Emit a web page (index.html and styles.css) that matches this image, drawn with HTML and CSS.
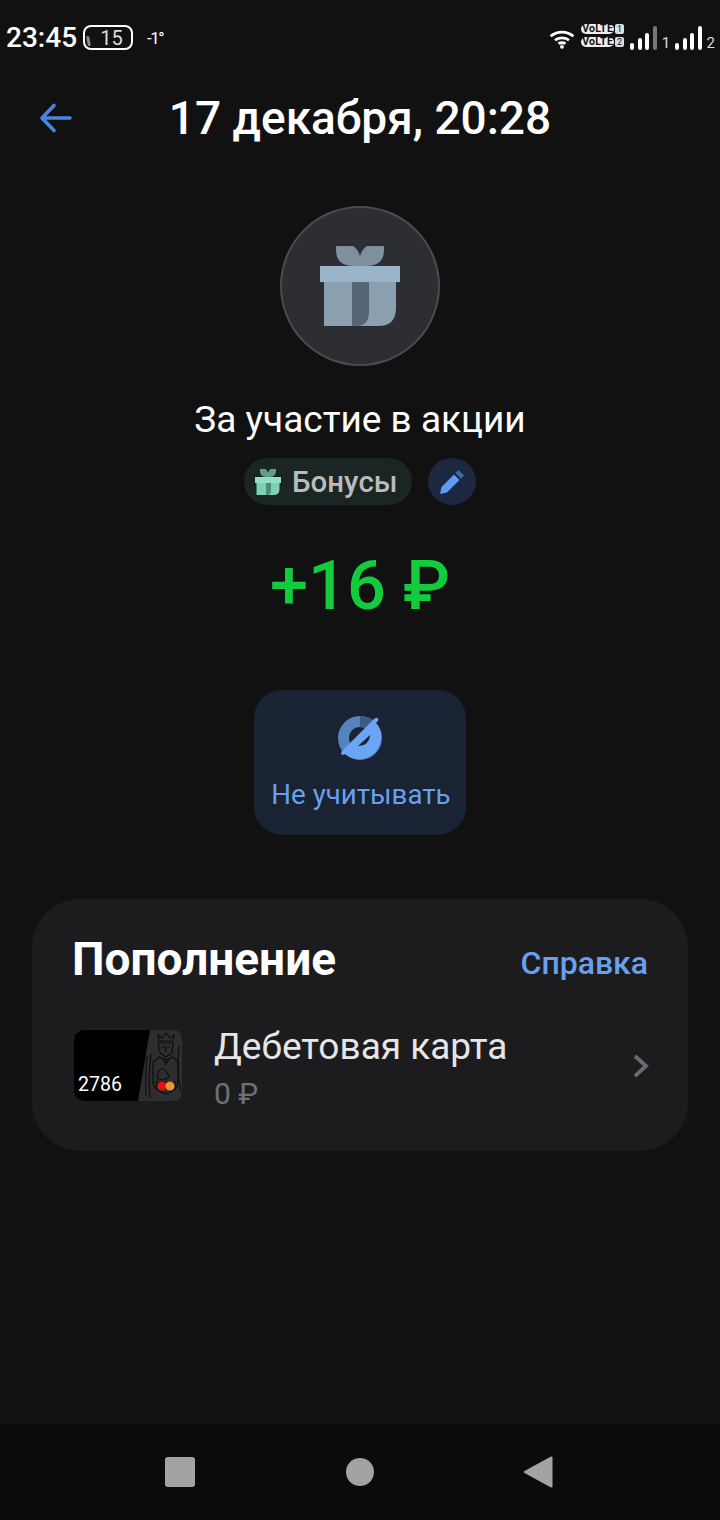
FILE: index.html
```html
<!DOCTYPE html>
<html lang="ru">
<head>
  <meta charset="UTF-8">
  <title>17 декабря, 20:28</title>
  <link rel="stylesheet" href="styles.css">
</head>
<body>
<div class="screen">
  <div class="status">
    <div class="status-left">
      <span class="clock">23:45</span>
      <span class="battery">15</span>
      <span class="temp">-1°</span>
    </div>
    <div class="status-right">
      <svg class="wifi" width="28" height="21" viewBox="0 0 30 24">
        <g fill="none" stroke="#fff" stroke-width="3.200">
          <path d="M2 9.500 C9 3 21 3 28 9.500"/>
          <path d="M7 14 C11 10.500 19 10.500 23 14"/>
          <path d="M11 18 C13 16.500 17 16.500 19 18"/>
        </g>
        <circle cx="15" cy="21.500" r="2.200" fill="#fff"/>
      </svg>
      <div class="volte">
        <div class="volte-row"><span class="volte-tag">VoLTE</span><span class="volte-num">1</span></div>
        <div class="volte-row"><span class="volte-tag">VoLTE</span><span class="volte-num">2</span></div>
      </div>
      <div class="signal">
        <i class="bar h1"></i><i class="bar h2"></i><i class="bar h3"></i><i class="bar h4 dim"></i>
      </div>
      <span class="sim">1</span>
      <div class="signal">
        <i class="bar h1"></i><i class="bar h2"></i><i class="bar h3"></i><i class="bar h4"></i>
      </div>
      <span class="sim">2</span>
    </div>
  </div>

  <div class="header">
    <svg class="back" width="34" height="32" viewBox="0 0 34 32">
      <path d="M31 16 H3 M15 3.500 L3 16 L15 28.500" fill="none" stroke="#4a86e0" stroke-width="3.600" stroke-linecap="round" stroke-linejoin="round"/>
    </svg>
    <h1 class="title">17 декабря, 20:28</h1>
  </div>

  <div class="main">
    <div class="gift-circle">
      <svg width="80" height="80" viewBox="0 0 80 80">
        <path d="M16 0 H33 Q38 3 40 10 Q42 3 47 0 H64 V4 Q64 20 46 20 H34 Q16 20 16 4 Z" fill="#7e8f9d"/>
        <rect x="4" y="36" width="30" height="44" fill="#8aa0b1"/>
        <path d="M44 36 H76 V62 Q76 80 58 80 H36 Z" fill="#8aa0b1"/>
        <path d="M32 36 H49 V66 Q49 80 36 80 H32 Z" fill="#566675"/>
        <rect x="0" y="20" width="80" height="16" fill="#99b4c7"/>
      </svg>
    </div>
    <div class="reason">За участие в акции</div>
    <div class="tags">
      <div class="pill">
        <svg width="26" height="26" viewBox="0 0 26 26">
          <path d="M5 0 H10.500 Q12 1 13 3.500 Q14 1 15.500 0 H21 V1.500 Q21 8 15 8 H11 Q5 8 5 1.500 Z" fill="#5f9f8b"/>
          <path d="M1.500 13 H24.500 V20 Q24.500 26 18.500 26 H1.500 Z" fill="#7fd1b6"/>
          <path d="M11 13 H16 V22 Q16 26 12 26 H11 Z" fill="#4f8b78"/>
          <rect x="0" y="8" width="26" height="6" fill="#8fe0c5"/>
        </svg>
        <span class="pill-text">Бонусы</span>
      </div>
      <div class="edit">
        <svg width="26" height="26" viewBox="0 0 26 26">
          <path d="M1 25 L2.500 18 L15 5.500 L20.500 11 L8 23.500 Z" fill="#5f9bf5"/>
          <path d="M16.500 4 L19.500 1 L25 6.500 L22 9.500 Z" fill="#3f68a8"/>
        </svg>
      </div>
    </div>
    <div class="amount">+16 ₽</div>
    <div class="action">
      <svg width="46" height="46" viewBox="0 0 46 46">
        <circle cx="23" cy="23" r="16.500" fill="none" stroke="#5682bd" stroke-width="11"/>
        <path d="M23 1 A22 22 0 0 1 38 7 L30 15 A11 11 0 0 0 23 12 Z" fill="#3a5a88"/>
        <path d="M4.500 36.500 L37 4 Q41 1 41.500 5 L39 8 A22 22 0 0 1 8 39 L6.500 40 Q3 40 4.500 36.500 Z M21 31 L33 20 A11 11 0 0 1 21 31 Z" fill="#6ea4f5" fill-rule="evenodd"/>
      </svg>
      <span class="action-text">Не учитывать</span>
    </div>
  </div>

  <div class="card">
    <div class="card-head">
      <h2 class="card-title">Пополнение</h2>
      <span class="card-link">Справка</span>
    </div>
    <div class="row">
      <div class="bank-card">
        <span class="bank-num">2786</span>
        <svg class="bank-art" width="44" height="71" viewBox="0 0 44 71">
          <path d="M12 0 H35 Q44 0 44 9 V62 Q44 71 35 71 H0 Z" fill="#2e2e30"/>
          <g fill="none" stroke="#0e0e0e" stroke-width="1.200">
            <path d="M21 11 L20 5 L24 8 L28 3 L32 8 L36 5 L35 11 Z"/>
            <path d="M20 13 H35 L34 23 L28 27 L22 23 Z M24 17 H27 M29 17 H32 M28 17 V22"/>
            <path d="M15 32 L21 27 L28 30 L35 27 L40 32 V52 Q40 60 28 64 Q15 60 15 52 Z"/>
            <path d="M28 30 V36 M24 28 L28 34 L32 28"/>
            <path d="M20 42 Q24 36 28 41 L31 46 Q29 50 24 50 L19 48 Z"/>
            <path d="M16 52 H39 M19 60 Q17 56 20 53 M37 60 Q39 56 36 53"/>
            <path d="M9 26 Q7 45 8 66 M13 24 Q10 45 12 68 M41 16 Q38 40 43 62"/>
          </g>
          <circle cx="24" cy="56" r="4.500" fill="#e3100f"/>
          <circle cx="32" cy="56" r="4.500" fill="#f5a030" fill-opacity="0.920"/>
        </svg>
      </div>
      <div class="row-info">
        <div class="row-title">Дебетовая карта</div>
        <div class="row-sub">0 ₽</div>
      </div>
      <svg class="chevron" width="18" height="26" viewBox="0 0 18 26">
        <path d="M3 3 L14 13 L3 23" fill="none" stroke="#6a6b70" stroke-width="3.800"/>
      </svg>
    </div>
  </div>

  <div class="spacer"></div>

  <div class="navbar">
    <i class="nav-square"></i>
    <i class="nav-circle"></i>
    <svg width="30" height="34" viewBox="0 0 30 34">
      <path d="M28 1.500 Q29.500 1 29.500 3 V31 Q29.500 33 28 32.500 L1.500 18 Q0 17 1.500 16 Z" fill="#a3a3a3"/>
    </svg>
  </div>
</div>
</body>
</html>
```

FILE: styles.css
```css
body, h1, h2 {
  margin: 0;
  padding: 0;
}

body {
  background: #111112;
  font-family: Roboto, "Noto Sans", sans-serif;
  color: #fff;
}

.screen {
  width: 720px;
  height: 1520px;
  display: flex;
  flex-direction: column;
  overflow: hidden;
}

/* status bar */
.status {
  height: 76px;
  padding: 0 5px 0 6px;
  display: flex;
  justify-content: space-between;
  align-items: flex-start;
  box-sizing: border-box;
}

.status-left {
  display: flex;
  align-items: flex-start;
  padding-top: 21px;
}

.clock {
  font-size: 28px;
  font-weight: 500;
  line-height: 34px;
}

.battery {
  width: 50px;
  height: 25px;
  margin: 4px 0 0 6px;
  padding-left: 7px;
  position: relative;
  border: 2px solid #fff;
  border-radius: 8px;
  box-sizing: border-box;
  font-size: 20px;
  line-height: 22px;
  text-align: center;
  color: #ddd;
}

.battery::before {
  content: "";
  position: absolute;
  left: 2px;
  top: 9px;
  width: 3px;
  height: 10px;
  border-radius: 2px;
  background: #8c8c8c;
  transform: skewX(10deg);
}

.temp {
  margin: 4px 0 0 14px;
  font-size: 17px;
  line-height: 26px;
  letter-spacing: -1.500px;
}

.status-right {
  display: flex;
  align-items: flex-end;
  gap: 5px;
  margin-top: 24px;
  height: 26px;
}

.wifi {
  margin-bottom: 1px;
}

.volte {
  width: 44px;
  margin-bottom: 3px;
  display: flex;
  flex-direction: column;
  gap: 3px;
}

.volte-row {
  display: flex;
  gap: 1px;
  height: 10px;
}

.volte-tag {
  width: 33px;
  background: #eee;
  color: #111;
  font-size: 10.500px;
  font-weight: 700;
  line-height: 10px;
  letter-spacing: 0.300px;
  text-align: center;
  border-radius: 5px;
}

.volte-num {
  width: 9px;
  background: #ddd;
  color: #111;
  font-size: 9px;
  line-height: 10px;
  text-align: center;
  border-radius: 2px;
}

.signal {
  display: flex;
  align-items: flex-end;
  gap: 3.500px;
}

.bar {
  width: 4px;
  background: #fff;
  border-radius: 2px;
}

.h1 { height: 7px; }
.h2 { height: 12px; }
.h3 { height: 17px; }
.h4 { height: 24px; }
.dim { background: #777; }

.sim {
  font-size: 15px;
  line-height: 14px;
  color: #ddd;
}

/* header */
.header {
  height: 84px;
  position: relative;
  display: flex;
  align-items: center;
  justify-content: center;
}

.back {
  position: absolute;
  left: 39px;
  top: 26px;
}

.title {
  font-size: 46px;
  font-weight: 500;
  line-height: 84px;
}

/* main block */
.main {
  display: flex;
  flex-direction: column;
  align-items: center;
  padding-top: 46px;
}

.gift-circle {
  width: 160px;
  height: 160px;
  box-sizing: border-box;
  border: 2px solid #4a4b4f;
  border-radius: 50%;
  background: #2d2e33;
  display: flex;
  align-items: center;
  justify-content: center;
}

.reason {
  margin-top: 32px;
  font-size: 37px;
  line-height: 44px;
}

.tags {
  margin-top: 16px;
  display: flex;
  gap: 16px;
}

.pill {
  width: 168px;
  height: 47px;
  box-sizing: border-box;
  padding-left: 11px;
  border-radius: 24px;
  background: #1b2523;
  display: flex;
  align-items: center;
  gap: 11px;
}

.pill-text {
  font-size: 29.500px;
  font-weight: 500;
  color: #b9bbbd;
}

.edit {
  width: 48px;
  height: 47px;
  border-radius: 50%;
  background: #1b2840;
  display: flex;
  align-items: center;
  justify-content: center;
}

.amount {
  margin-top: 41px;
  font-size: 68.500px;
  font-weight: 500;
  line-height: 80px;
  color: #13cc3e;
}

.action {
  margin-top: 64px;
  width: 212px;
  height: 145px;
  box-sizing: border-box;
  padding-top: 25px;
  border-radius: 28px;
  background: #1a2333;
  display: flex;
  flex-direction: column;
  align-items: center;
  gap: 16px;
}

.action-text {
  margin-left: 2px;
  font-size: 27.700px;
  line-height: 36px;
  color: #68a0ee;
}

/* card */
.card {
  margin: 64px 32px 0;
  height: 252px;
  box-sizing: border-box;
  padding: 32px 40px 0 42px;
  border-radius: 48px;
  background: #1c1c1f;
}

.card-head {
  display: flex;
  justify-content: space-between;
  align-items: center;
  height: 56px;
  margin-left: -2px;
}

.card-title {
  font-size: 46px;
  font-weight: 700;
  line-height: 56px;
}

.card-link {
  font-size: 32px;
  font-weight: 500;
  color: #68a0ee;
  padding-top: 8px;
}

.row {
  margin-top: 38px;
  display: flex;
  align-items: flex-start;
}

.bank-card {
  width: 108px;
  height: 71px;
  margin-top: 5px;
  position: relative;
  background: #000;
  border-radius: 10px;
  flex: none;
}

.bank-num {
  position: absolute;
  left: 4px;
  bottom: 4px;
  font-size: 19.500px;
  line-height: 24px;
}

.bank-art {
  position: absolute;
  right: 0;
  top: 0;
}

.row-info {
  margin-left: 32px;
  flex: 1;
}

.row-title {
  font-size: 37px;
  line-height: 44px;
  color: #e6e6e8;
}

.row-sub {
  margin-top: 7px;
  font-size: 30px;
  line-height: 36px;
  color: #6f7075;
}

.chevron {
  margin: 28px -2px 0 0;
}

.spacer {
  flex: 1;
}

/* nav bar */
.navbar {
  height: 96px;
  background: #0b0b0b;
  display: flex;
  align-items: center;
  justify-content: space-between;
  box-sizing: border-box;
  padding: 0 167px 0 165px;
}

.nav-square {
  width: 30px;
  height: 30px;
  border-radius: 3px;
  background: #a3a3a3;
}

.nav-circle {
  width: 28px;
  height: 28px;
  margin-left: 2px;
  border-radius: 50%;
  background: #a3a3a3;
}
```
